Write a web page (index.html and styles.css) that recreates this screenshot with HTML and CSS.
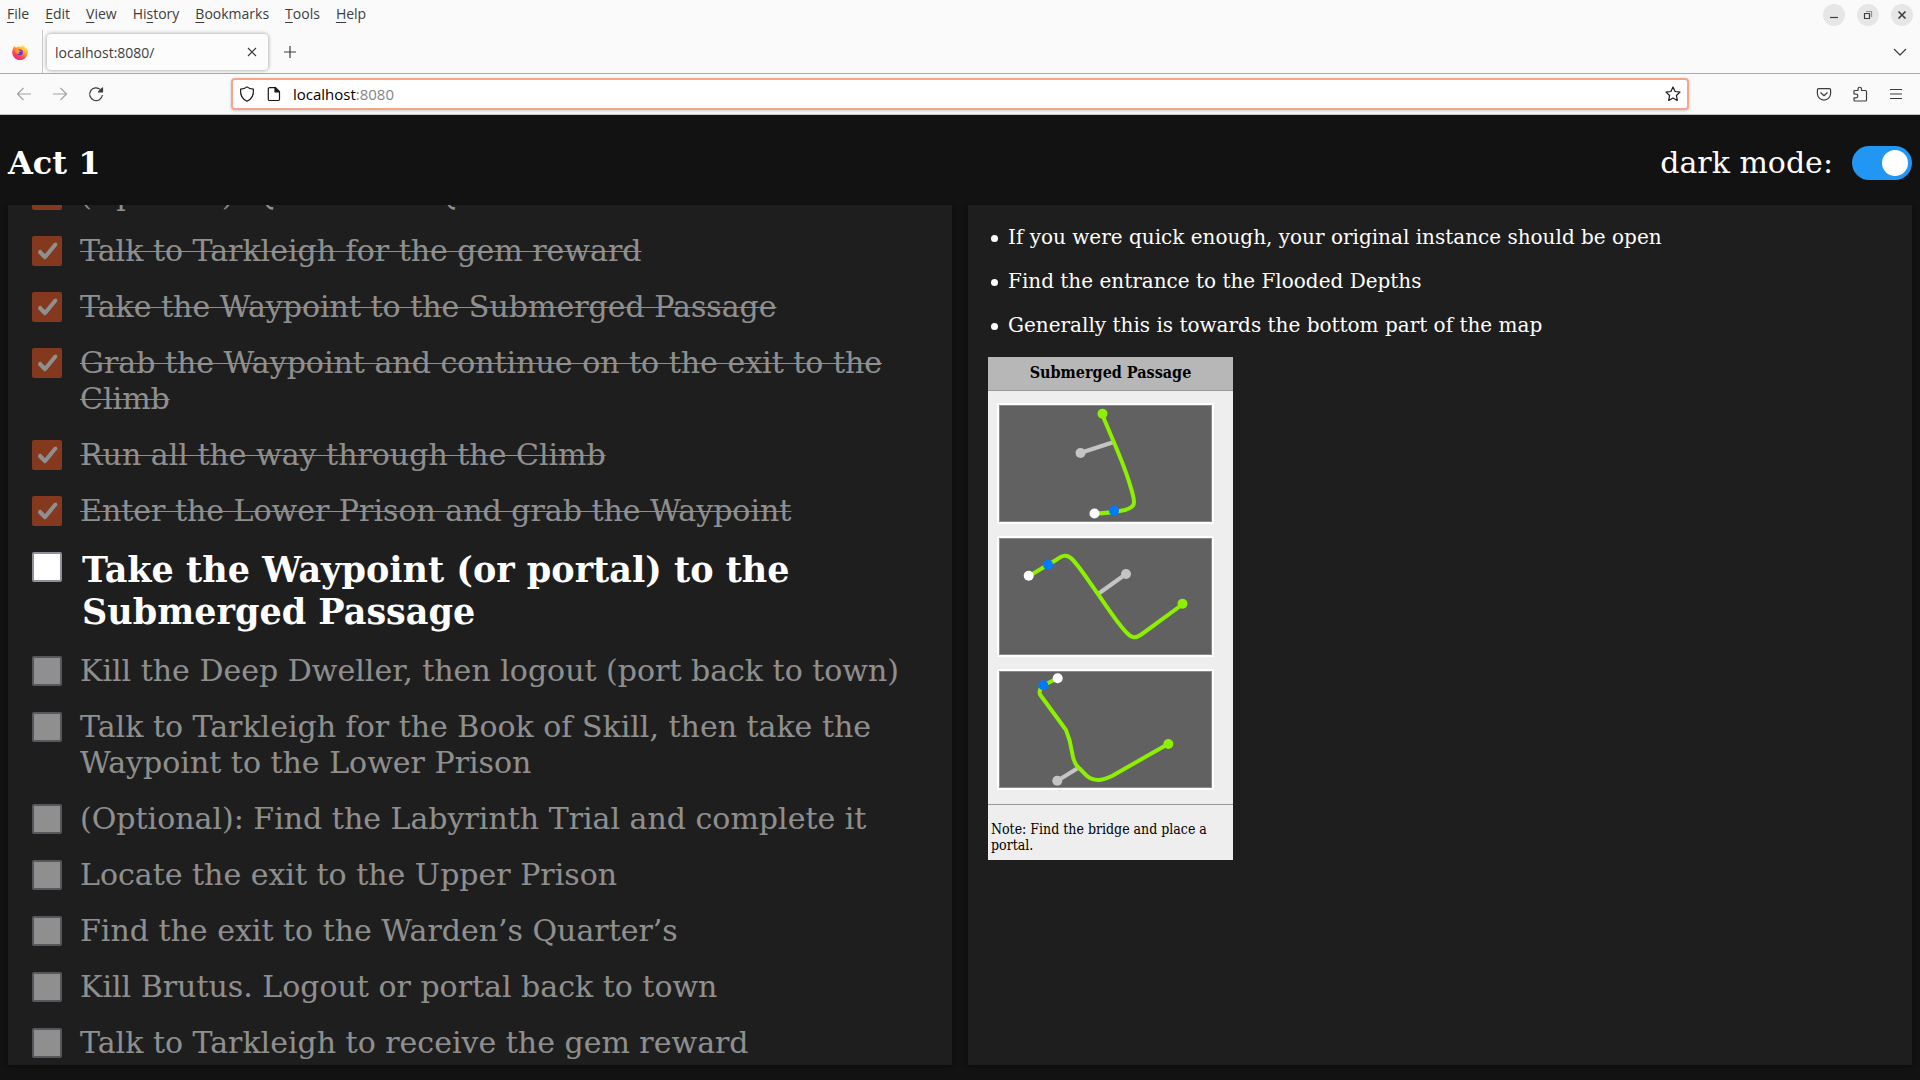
FILE: index.html
```html
<!DOCTYPE html>
<html lang="en">
<head>
<meta charset="utf-8">
<title>localhost:8080/</title>
<link rel="stylesheet" href="styles.css">
</head>
<body>
<header class="browser">
  <div class="titlebar">
    <nav class="menus" aria-label="Menu bar">
      <button type="button"><u>F</u>ile</button>
      <button type="button"><u>E</u>dit</button>
      <button type="button"><u>V</u>iew</button>
      <button type="button">Hi<u>s</u>tory</button>
      <button type="button"><u>B</u>ookmarks</button>
      <button type="button"><u>T</u>ools</button>
      <button type="button"><u>H</u>elp</button>
    </nav>
    <div class="window-controls">
      <button type="button" aria-label="Minimize"><svg width="22" height="22" viewBox="0 0 22 22"><path d="M7 13.5h8"/></svg></button>
      <button type="button" aria-label="Restore"><svg width="22" height="22" viewBox="0 0 22 22"><path d="M7.5 9.5h5v5h-5z"/><path class="faint" d="M9 7.5h5.5V13"/></svg></button>
      <button type="button" aria-label="Close"><svg width="22" height="22" viewBox="0 0 22 22"><path class="bold" d="M7.5 7.5l7 7M14.5 7.5l-7 7"/></svg></button>
    </div>
  </div>
  <div class="tabbar">
    <button type="button" class="pinned" aria-label="Firefox View">
      <svg width="16" height="16" viewBox="0 0 16 16">
        <defs>
          <linearGradient id="flame" x1="0.8" y1="0.05" x2="0.25" y2="0.95">
            <stop offset="0" stop-color="#fff44f"/><stop offset="0.35" stop-color="#ffb02f"/><stop offset="0.7" stop-color="#ff4a46"/><stop offset="1" stop-color="#f0208a"/>
          </linearGradient>
          <linearGradient id="globe" x1="0.5" y1="0" x2="0.4" y2="1">
            <stop offset="0" stop-color="#a833e1"/><stop offset="1" stop-color="#4a3ad9"/>
          </linearGradient>
        </defs>
        <path fill="url(#flame)" d="M10.6.2c-.7 1-.6 2-.1 2.900C9.700 2.600 8.500 2.400 7.500 2.700 6.300 2.400 5.200 2.900 4.400 3.500c-.9-.2-1.500-.6-1.800-1.600C1.300 3.200.8 4.700.5 6.200.2 8 .1 8.800.4 9.900 1.300 13.500 4.500 16 8 16c4.400 0 7.800-3.500 7.800-7.800 0-1.800-.5-3.300-1.400-4.400.1.500.2.900.1 1.300C13.900 3.100 11.600 2.600 10.600.2z"/>
        <circle cx="7.900" cy="8.200" r="3" fill="url(#globe)"/>
        <path fill="#ff9a2a" d="M3.200 6.200c1-.9 2.400-.9 3.500-.3.400.5 1.300.7 2 .8-.1.900-1.300 1-1.800 1.400-.3.800-.1 1.300.5 1.900-2 .2-4.200-.9-4.200-3.800z"/>
      </svg>
    </button>
    <div class="tab"><span>localhost:8080/</span>
      <button type="button" aria-label="Close tab"><svg width="10" height="10" viewBox="0 0 10 10"><path d="M1 1l8 8M9 1l-8 8"/></svg></button>
    </div>
    <button type="button" class="newtab" aria-label="New tab"><svg width="12" height="12" viewBox="0 0 12 12"><path d="M6 0v12M0 6h12"/></svg></button>
    <button type="button" class="alltabs" aria-label="List all tabs"><svg width="14" height="8" viewBox="0 0 14 8"><path d="M1 1l6 6 6-6"/></svg></button>
  </div>
  <div class="toolbar">
    <button type="button" class="off" aria-label="Back"><svg width="16" height="16" viewBox="0 0 16 16"><path d="M15 8H2M7.500 2L1.500 8l6 6"/></svg></button>
    <button type="button" class="off" aria-label="Forward"><svg width="16" height="16" viewBox="0 0 16 16"><path d="M1 8h13M8.500 2l6 6-6 6"/></svg></button>
    <button type="button" aria-label="Reload"><svg width="16" height="16" viewBox="0 0 16 16"><path d="M12.500 3.600A6.400 6.400 0 1 0 14.400 9"/><path class="solid" d="M14.500 2v4H10.500z"/></svg></button>
    <div class="spring"></div>
    <div class="urlbar">
      <svg width="16" height="16" viewBox="0 0 16 16"><path d="M8 .9C6 2.500 3.800 3 1.600 3.200c-.5 6 1.800 10 6.400 12 4.600-2 6.900-6 6.400-12C12.200 3 10 2.500 8 .9z"/></svg>
      <svg width="14" height="16" viewBox="0 0 14 16"><path d="M2.500 1.700h6l4 4v7.600a1.200 1.200 0 0 1-1.200 1.200H2.500a1.200 1.200 0 0 1-1.200-1.200V2.900a1.200 1.200 0 0 1 1.200-1.200z"/><path class="solid" d="M8 1.500V6h4.500z"/></svg>
      <div class="address" role="textbox" aria-label="Address" tabindex="0">localhost<span>:8080</span></div>
      <button type="button" aria-label="Bookmark this page"><svg width="16" height="16" viewBox="0 0 16 16"><path d="M8 1l2.100 4.500 4.900.6-3.600 3.400.9 4.900L8 12l-4.300 2.400.9-4.900L1 6.100l4.900-.6z"/></svg></button>
    </div>
    <div class="spring"></div>
    <button type="button" aria-label="Save to Pocket"><svg width="16" height="16" viewBox="0 0 16 16"><path d="M2.700 2.600h10.600a1.300 1.300 0 0 1 1.300 1.300v3.600a6.600 6.600 0 0 1-13.200 0V3.900a1.300 1.300 0 0 1 1.300-1.300zM4.500 6.500L8 9.700l3.500-3.200"/></svg></button>
    <button type="button" aria-label="Extensions"><svg width="16" height="16" viewBox="0 0 16 16"><path d="M2 8V5.500a1 1 0 0 1 1-1h3V3a1.700 1.700 0 0 1 3.500 0v1.500h4a1 1 0 0 1 1 1V14a1 1 0 0 1-1 1H3a1 1 0 0 1-1-1v-2.200h2a1.800 1.800 0 0 0 0-3.700z"/></svg></button>
    <button type="button" aria-label="Application menu"><svg width="16" height="16" viewBox="0 0 16 16"><path d="M2 3.500h12M2 8h12M2 12.500h12"/></svg></button>
  </div>
</header>
<main class="page">
  <div class="heading">
    <h1>Act 1</h1>
    <label class="mode">dark mode: <input type="checkbox" class="switch" checked></label>
  </div>
  <div class="panels">
    <section class="panel steps">
      <label class="step done"><input type="checkbox" checked><span>(Optional): Quicksilver Quest</span></label>
      <label class="step done"><input type="checkbox" checked><span>Talk to Tarkleigh for the gem reward</span></label>
      <label class="step done"><input type="checkbox" checked><span>Take the Waypoint to the Submerged Passage</span></label>
      <label class="step done"><input type="checkbox" checked><span>Grab the Waypoint and continue on to the exit to the Climb</span></label>
      <label class="step done"><input type="checkbox" checked><span>Run all the way through the Climb</span></label>
      <label class="step done"><input type="checkbox" checked><span>Enter the Lower Prison and grab the Waypoint</span></label>
      <label class="step current"><input type="checkbox"><span>Take the Waypoint (or portal) to the Submerged Passage</span></label>
      <label class="step"><input type="checkbox"><span>Kill the Deep Dweller, then logout (port back to town)</span></label>
      <label class="step"><input type="checkbox"><span>Talk to Tarkleigh for the Book of Skill, then take the Waypoint to the Lower Prison</span></label>
      <label class="step"><input type="checkbox"><span>(Optional): Find the Labyrinth Trial and complete it</span></label>
      <label class="step"><input type="checkbox"><span>Locate the exit to the Upper Prison</span></label>
      <label class="step"><input type="checkbox"><span>Find the exit to the Warden’s Quarter’s</span></label>
      <label class="step"><input type="checkbox"><span>Kill Brutus. Logout or portal back to town</span></label>
      <label class="step"><input type="checkbox"><span>Talk to Tarkleigh to receive the gem reward</span></label>
    </section>
    <section class="panel notes">
      <ul>
        <li>If you were quick enough, your original instance should be open</li>
        <li>Find the entrance to the Flooded Depths</li>
        <li>Generally this is towards the bottom part of the map</li>
      </ul>
      <article class="card">
        <h2>Submerged Passage</h2>
        <div class="maps">
          <svg class="map" viewBox="0 0 213 117">
            <path class="side" d="M81 48l34-11"/>
            <path class="route" d="M103 9l12 28.500C122 54 128 69 131 80c3 9 4 13 4 17.500 0 4-4 6-9 7.500-9 2-20 3.200-31 3.700"/>
            <circle class="side-end" cx="81.500" cy="48" r="5"/><circle class="exit" cx="103.500" cy="8.700" r="5"/><circle class="waypoint" cx="115" cy="105.700" r="5"/><circle class="start" cx="95.500" cy="108.500" r="5"/>
          </svg>
          <svg class="map" viewBox="0 0 213 117">
            <path class="side" d="M99 56l28-20"/>
            <path class="route" d="M30 38l27-16c7-5 11-6 16-1 7 7 16 21 26 35 9 13 20 30 29 39 5 5 8 6 15 1l41-30"/>
            <circle class="side-end" cx="127" cy="36" r="5"/><circle class="exit" cx="183.500" cy="65.700" r="5"/><circle class="waypoint" cx="49" cy="26.700" r="5"/><circle class="start" cx="29.700" cy="37.700" r="5"/>
          </svg>
          <svg class="map" viewBox="0 0 213 117">
            <path class="side" d="M58 110l21-13"/>
            <path class="route" d="M59 7L44 14.500c-3 3-4 6-3 9L67 59c3 7 5 15 6 22 1 7 2 11 6 15l9 9c6 5 15 5 25 0l56-32"/>
            <circle class="side-end" cx="58.300" cy="109.700" r="5"/><circle class="exit" cx="169.300" cy="73" r="5"/><circle class="waypoint" cx="44.300" cy="14.300" r="5"/><circle class="start" cx="58.700" cy="7.300" r="5"/>
          </svg>
        </div>
        <p>Note: Find the bridge and place a portal.</p>
      </article>
    </section>
  </div>
</main>
</body>
</html>
```
FILE: styles.css
```css
* { box-sizing: border-box; }

body {
  margin: 0;
  height: 100vh;
  display: flex;
  flex-direction: column;
  background: #121212;
  color: #fff;
  font-family: "DejaVu Serif", serif;
}

button {
  margin: 0;
  padding: 0;
  border: 0;
  background: none;
  color: inherit;
  font: inherit;
}

/* Browser window */
.browser {
  flex: none;
  background: #fafafa;
  color: #3d3d3d;
  font: 14px/20px "Open Sans", "Noto Sans", sans-serif;
  border-bottom: 1px solid #c4c4c4;
}
.browser svg { display: block; fill: none; stroke: currentColor; stroke-width: 1.2; stroke-linejoin: round; }
.browser svg .solid { fill: currentColor; }
.browser .pinned svg { stroke: none; }
.titlebar, .tabbar, .toolbar { display: flex; align-items: center; }
.titlebar { height: 30px; padding: 0 7px; justify-content: space-between; }
.menus { display: flex; gap: 16px; padding-bottom: 2px; }
.menus button { height: 20px; }
.menus u { text-underline-offset: 3px; }
.window-controls { display: flex; gap: 12px; }
.window-controls button { border-radius: 50%; background: #e6e6e6; }
.window-controls .faint { opacity: 0.5; }
.window-controls .bold { stroke-width: 1.6; }

.tabbar { height: 44px; border-bottom: 1px solid #ababab; }
.pinned { display: flex; align-items: center; align-self: stretch; width: 43px; padding-left: 12px; border-right: 1px solid #c8c8c8; }
.tab {
  display: flex;
  align-items: center;
  justify-content: space-between;
  width: 221px;
  height: 36px;
  margin-left: 4px;
  padding: 0 11px 0 8px;
  border-radius: 4px;
  background: #fcfcfc;
  box-shadow: 0 0 4px rgba(0, 0, 0, 0.4);
}
.tab span { padding-top: 2px; }
.newtab { margin-left: 16px; }
.alltabs { margin: 0 13px 0 auto; }

.toolbar { height: 40px; padding: 0 6px; }
.toolbar > button { display: flex; justify-content: center; flex: none; width: 36px; }
.off { opacity: 0.45; }
.spring { flex: 118 1 0; }
.urlbar {
  flex: 1456 1 0;
  display: flex;
  align-items: center;
  gap: 12px;
  height: 32px;
  padding: 0 6px;
  border: 2px solid #f6a58a;
  border-radius: 4px;
  background: #fff;
  color: #1a1a1a;
  box-shadow: 0 1px 3px rgba(0, 0, 0, 0.2);
}
.address { flex: 1; color: #000; font-size: 15px; }
.address span { color: #858585; }

/* Guide */
.page {
  flex: 1;
  min-height: 0;
  display: flex;
  flex-direction: column;
  padding: 0 8px 15px;
}
.heading {
  flex: none;
  display: flex;
  align-items: center;
  justify-content: space-between;
  height: 90px;
  padding-top: 6px;
  font-size: 30px;
  line-height: 36px;
}
.heading h1 { margin: 0; font-size: 32px; }
.mode { display: flex; align-items: center; gap: 19px; }
.switch {
  appearance: none;
  width: 60px;
  height: 34px;
  margin: 0;
  padding: 4px;
  border-radius: 17px;
  background: #2196f3;
}
.switch::before { content: ""; display: block; width: 26px; height: 26px; border-radius: 50%; background: #fff; }
.switch:checked::before { margin-left: auto; }

.panels { flex: 1; min-height: 0; display: grid; grid-template-columns: 1fr 1fr; gap: 16px; }
.panel { overflow: hidden; background: #1e1e1e; box-shadow: 0 1px 4px rgba(0, 0, 0, 0.4); }

.steps {
  display: flex;
  flex-direction: column;
  justify-content: flex-end;
  gap: 20px;
  padding: 4px 24px;
}
.step { display: flex; align-items: flex-start; gap: 18px; font-size: 30px; line-height: 36px; opacity: 0.5; }
.step span { flex: 1; }
.step input {
  appearance: none;
  flex: none;
  width: 30px;
  height: 30px;
  margin: 3px 0 0;
  border: 2px solid #8f8f9d;
  border-radius: 2px;
  background: #fff;
}
.step input:checked {
  border-color: #e95420;
  background: #e95420;
}
.step input:checked::before {
  content: "";
  display: block;
  width: 26px;
  height: 26px;
  background: #fff;
  clip-path: path("M4.500 12.500L6.500 11.500L11 16L20 5L22.500 4.500L23.500 7L12.500 20.500L10.500 21.500L4 15z");
}
.done span { text-decoration: line-through; text-decoration-thickness: 1px; }
.current { gap: 20px; font-size: 35px; line-height: 42px; font-weight: bold; opacity: 1; }

.notes { padding: 20px; }
.notes ul { display: grid; gap: 20px; margin: 0 0 20px; padding: 0 0 0 3px; list-style: none; font-size: 20px; line-height: 24px; }
.notes li { display: flex; align-items: center; gap: 10px; }
.notes li::before { content: ""; flex: none; width: 7px; height: 7px; margin-top: 2px; border-radius: 50%; background: #fff; }

.card {
  width: 245px;
  background: #eee;
  color: #000;
  font: 14px/16px "DejaVu Serif Condensed", "DejaVu Serif", serif;
  font-stretch: condensed;
}
.card h2 { margin: 0; padding: 4px 0 5px; border-bottom: 1px solid #999; background: #b7b7b7; font-size: 16px; line-height: 24px; text-align: center; }
.maps { display: grid; gap: 12px; padding: 12px 19px 14px 9px; border-bottom: 1px solid #999; }
.map { display: block; width: 100%; border: 2px solid #fff; background: #616161; box-shadow: inset 0 0 0 1px #8c8c8c; }
.map path { fill: none; stroke-width: 4; stroke-linejoin: round; }
.side { stroke: #c4c4c4; }
.route { stroke: #8cf000; }
.side-end { fill: #c4c4c4; }
.exit { fill: #8cf000; }
.waypoint { fill: #007bff; }
.start { fill: #fff; }
.card p { margin: 0; padding: 16px 3px 7px; }
```
